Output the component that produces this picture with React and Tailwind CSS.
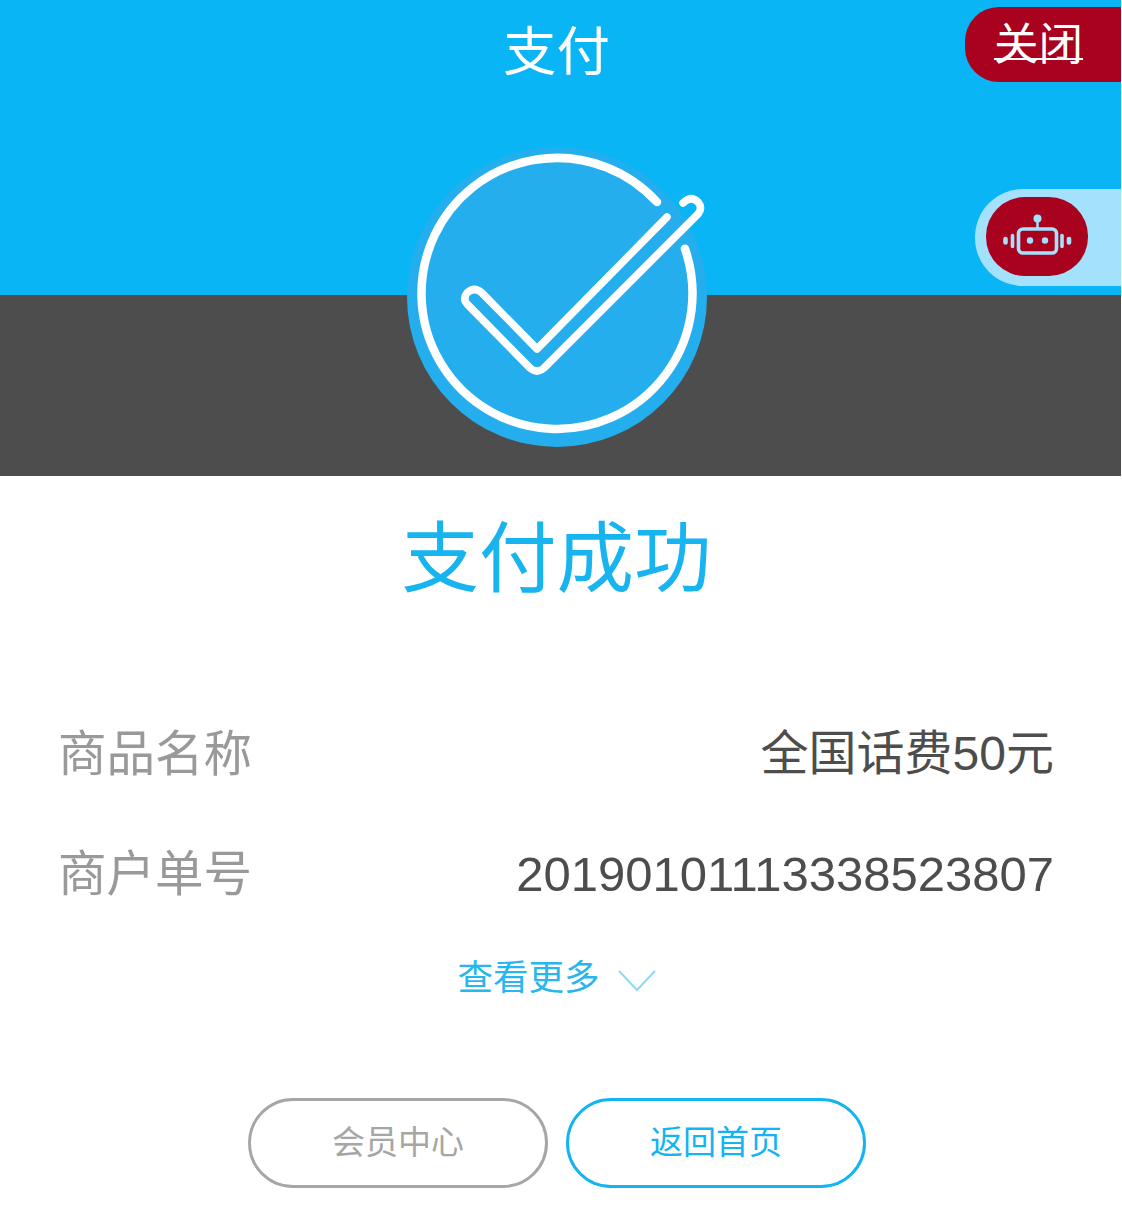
const font = { fontFamily: '"Liberation Sans", "Noto Sans CJK SC", sans-serif' };

function Badge() {
  return (
    <svg viewBox="407 147 300 300" className="absolute left-[407px] top-[147px] w-[300px] h-[300px] overflow-visible" fill="none">
      <circle cx="557" cy="297" r="150" fill="#25aeee" />
      <path d="M657 202 A135.5 135.5 0 1 0 684.9 248.7" stroke="#fff" strokeWidth="8.5" strokeLinecap="round" />
      <path
        d="M667 217 L537 349 L482 293 Q474 286 467 293 Q462 299 468 305 L530 368 Q537 374 544 368 L698 214 Q703 208 698 202 Q691 195 683 203"
        stroke="#fff"
        strokeWidth="7.5"
        strokeLinecap="round"
        strokeLinejoin="round"
      />
    </svg>
  );
}

function Robot() {
  return (
    <svg viewBox="0 0 70 50" className="w-[70px] h-[50px]" fill="none" stroke="#a4e1fd">
      <circle cx="35.5" cy="6.5" r="4" fill="#a4e1fd" stroke="none" />
      <path d="M35.5 9v7" strokeWidth="2.5" />
      <rect x="16.5" y="17" width="38" height="24" rx="4.5" strokeWidth="3.6" />
      <circle cx="28" cy="28.5" r="3.2" fill="#a4e1fd" stroke="none" />
      <circle cx="43" cy="28.5" r="3.2" fill="#a4e1fd" stroke="none" />
      <path d="M10.5 23.5v11M60 23.5v11" strokeWidth="3.6" strokeLinecap="round" />
      <path d="M3.5 27v3.5M67 27v3.5" strokeWidth="4.6" strokeLinecap="round" />
    </svg>
  );
}

function Row({ label, value, valueClass }) {
  return (
    <div className="flex items-center justify-between h-[60px]">
      <span className="text-[48.5px] leading-[60px] text-[#999999]">{label}</span>
      <span className={`leading-[60px] text-[#4d4d4d] ${valueClass}`}>{value}</span>
    </div>
  );
}

export default function App() {
  return (
    <div className="relative w-[1121px] h-[1217px] bg-white overflow-hidden" style={font}>
      <div className="relative flex flex-col h-[476px]">
        <div className="h-[295px] bg-[#09b5f5] flex justify-center pt-[22px] pr-[8px]">
          <h1 className="text-[53.5px] leading-[62px] font-normal text-white">支付</h1>
        </div>
        <div className="flex-1 bg-[#4d4d4d]" />
        <Badge />
        <button className="absolute right-0 top-[7px] w-[156px] h-[75px] rounded-l-[34px] bg-[#a8021f] pl-[29px] text-left text-[44.5px] leading-[72px] text-white underline decoration-2 underline-offset-[-2px]">
          关闭
        </button>
        <div className="absolute right-0 top-[189px] w-[146px] h-[97px] rounded-l-[48px] bg-[#a4e1fd] flex items-start pt-[8px] pl-[11px]">
          <div className="w-[102px] h-[79px] rounded-[39px] bg-[#a8021f] flex items-center justify-center">
            <Robot />
          </div>
        </div>
      </div>

      <h2 className="mt-[37px] pr-[8px] text-center text-[77.5px] leading-[92px] font-normal text-[#17b4ef]">支付成功</h2>

      <div className="mt-[119px] pl-[58px] pr-[67px] flex flex-col gap-[60px]">
        <Row label="商品名称" value="全国话费50元" valueClass="text-[48px]" />
        <Row label="商户单号" value="20190101113338523807" valueClass="text-[49px]" />
      </div>

      <div className="mt-[52px] flex items-center justify-center gap-[18px] pr-[8px]">
        <span className="text-[35.5px] leading-[44px] text-[#29b6ef]">查看更多</span>
        <svg viewBox="0 0 38 22" className="w-[38px] h-[22px] mt-[6px]" fill="none" stroke="#8fd9f7" strokeWidth="2">
          <path d="M1 1 L19 20 L37 1" />
        </svg>
      </div>

      <div className="mt-[98px] flex justify-center gap-[18px] pr-[7px]">
        <button className="w-[300px] h-[90px] rounded-full border-[3px] border-[#a6a6a6] text-[33px] text-[#a6a6a6]">会员中心</button>
        <button className="w-[300px] h-[90px] rounded-full border-[3px] border-[#14b4f2] text-[33px] text-[#14b4f2]">返回首页</button>
      </div>
    </div>
  );
}
